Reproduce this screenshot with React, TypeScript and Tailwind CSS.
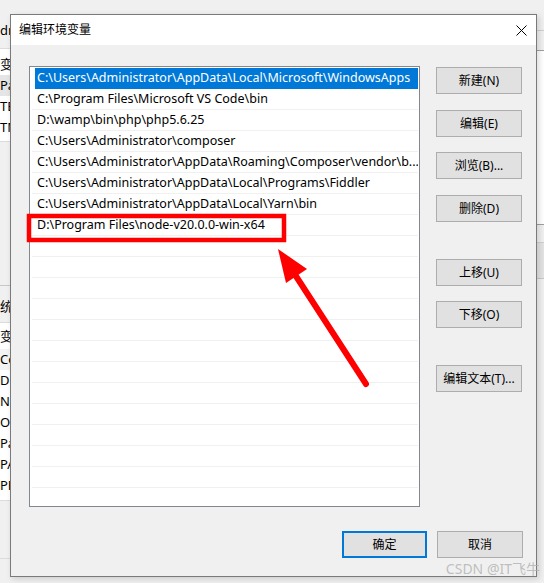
import React from "react";

const paths = [
  "C:\\Users\\Administrator\\AppData\\Local\\Microsoft\\WindowsApps",
  "C:\\Program Files\\Microsoft VS Code\\bin",
  "D:\\wamp\\bin\\php\\php5.6.25",
  "C:\\Users\\Administrator\\composer",
  "C:\\Users\\Administrator\\AppData\\Roaming\\Composer\\vendor\\b...",
  "C:\\Users\\Administrator\\AppData\\Local\\Programs\\Fiddler",
  "C:\\Users\\Administrator\\AppData\\Local\\Yarn\\bin",
  "D:\\Program Files\\node-v20.0.0-win-x64",
];

const rows = [...paths, ...Array(13).fill("")];

const sideButtons = [
  { label: "新建(N)", gap: "mt-0" },
  { label: "编辑(E)", gap: "mt-[16px]" },
  { label: "浏览(B)...", gap: "mt-[15px]" },
  { label: "删除(D)", gap: "mt-[16px]" },
  { label: "上移(U)", gap: "mt-[37px]" },
  { label: "下移(O)", gap: "mt-[15px]" },
  { label: "编辑文本(T)...", gap: "mt-[37px]" },
];

function WinButton({ label, primary, className = "" }: { label: string; primary?: boolean; className?: string }) {
  return (
    <div
      className={
        "h-[27px] flex items-center justify-center text-[12px] text-black bg-[#e1e1e1] " +
        (primary ? "border-2 border-[#0078d7] " : "border border-[#adadad] ") +
        className
      }
    >
      {label}
    </div>
  );
}

export default function App() {
  return (
    <div className="relative w-[544px] h-[583px] overflow-hidden bg-[#f0f0f0] font-['Noto_Sans','Noto_Sans_CJK_SC',sans-serif] text-black">
      {/* window behind, left edge */}
      <div className="absolute left-0 top-0 w-[40px] h-full flex flex-col text-[13px] leading-[21px]">
        <div className="h-[48px] pt-[20px]">dm</div>
        <div className="bg-white border-y border-[#dcdcdc] flex flex-col pt-[5px] pb-[3px]">
          <div className="h-[21px]">变</div>
          <div className="h-[21px] bg-[#e5e5e5]">Pa</div>
          <div className="h-[21px]">TE</div>
          <div className="h-[21px]">TM</div>
        </div>
        <div className="h-[144px] border-b border-[#c8c8c8]" />
        <div className="h-[36px] pt-[10px]">统</div>
        <div className="bg-white border-y border-[#dcdcdc] flex flex-col pt-[3px] pb-[4px]">
          <div className="h-[23px]">变</div>
          <div className="h-[21px] bg-[#f3f3f3]">Co</div>
          <div className="h-[21px]">D</div>
          <div className="h-[21px]">N</div>
          <div className="h-[21px]">O</div>
          <div className="h-[21px]">Pa</div>
          <div className="h-[21px]">PA</div>
          <div className="h-[21px]">PR</div>
        </div>
        <div className="h-[58px] border-b border-[#dcdcdc]" />
      </div>

      {/* window behind, right edge */}
      <div className="absolute left-[537px] top-0 w-[7px] h-full flex flex-col">
        <div className="h-[30px]" />
        <div className="h-[20px] border-t border-[#d0d0d0]" />
        <div className="h-[175px] bg-white border-y border-[#a0a0a0]" />
        <div className="h-[18px] border-b border-[#d0d0d0]" />
        <div className="h-[36px] bg-[#e3e3e3] border-b border-[#c8c8c8]" />
      </div>

      {/* dialog */}
      <div className="absolute left-[10px] top-[14px] w-[527px] h-[563px] border border-[#7a7a7a] bg-[#f0f0f0] flex flex-col shadow-[2px_2px_6px_rgba(0,0,0,0.15)]">
        <div className="h-[30px] bg-white flex items-center justify-between pl-[8px] pr-[9px]">
          <span className="text-[12px]">编辑环境变量</span>
          <svg width="11" height="11" viewBox="0 0 11 11">
            <path d="M0.5 0.5 L10.5 10.5 M10.5 0.5 L0.5 10.5" stroke="#000" strokeWidth="1" />
          </svg>
        </div>
        <div className="flex-1 flex flex-col pl-[18px] pr-[13px] pt-[21px]">
          <div className="flex gap-[16px]">
            <div className="w-[391px] h-[441px] bg-white border border-[#828790] overflow-hidden pt-[1px] pr-[1px]">
              {rows.map((r, i) => (
                <div
                  key={i}
                  className={
                    "h-[21px] ml-[2px] flex items-center text-[12.5px] whitespace-nowrap overflow-hidden " +
                    (i === 0 ? "bg-[#0078d7] text-white ml-[5px] pl-[2px]" : "border-b border-[#f0f0f0] pl-[5px]")
                  }
                >
                  {r}
                </div>
              ))}
            </div>
            <div className="w-[86px] flex flex-col pt-[1px]">
              {sideButtons.map((b) => (
                <WinButton key={b.label} label={b.label} className={b.gap} />
              ))}
            </div>
          </div>
          <div className="flex justify-end gap-[10px] mt-[24px]">
            <WinButton label="确定" primary className="w-[85px]" />
            <WinButton label="取消" className="w-[86px]" />
          </div>
        </div>
      </div>

      {/* annotation */}
      <svg className="absolute left-0 top-0" width="544" height="583" viewBox="0 0 544 583">
        <rect x="29" y="216" width="255" height="24" fill="none" stroke="#ff0000" strokeWidth="4.5" />
        <line x1="366" y1="384" x2="292" y2="270" stroke="#ff0000" strokeWidth="6" strokeLinecap="round" />
        <polygon points="278,249 307,269 286,283" fill="#ff0000" />
      </svg>

      <div className="absolute right-[4px] bottom-[4px] text-[14px] text-[#b0b0b0]/80">CSDN @IT飞牛</div>
    </div>
  );
}
